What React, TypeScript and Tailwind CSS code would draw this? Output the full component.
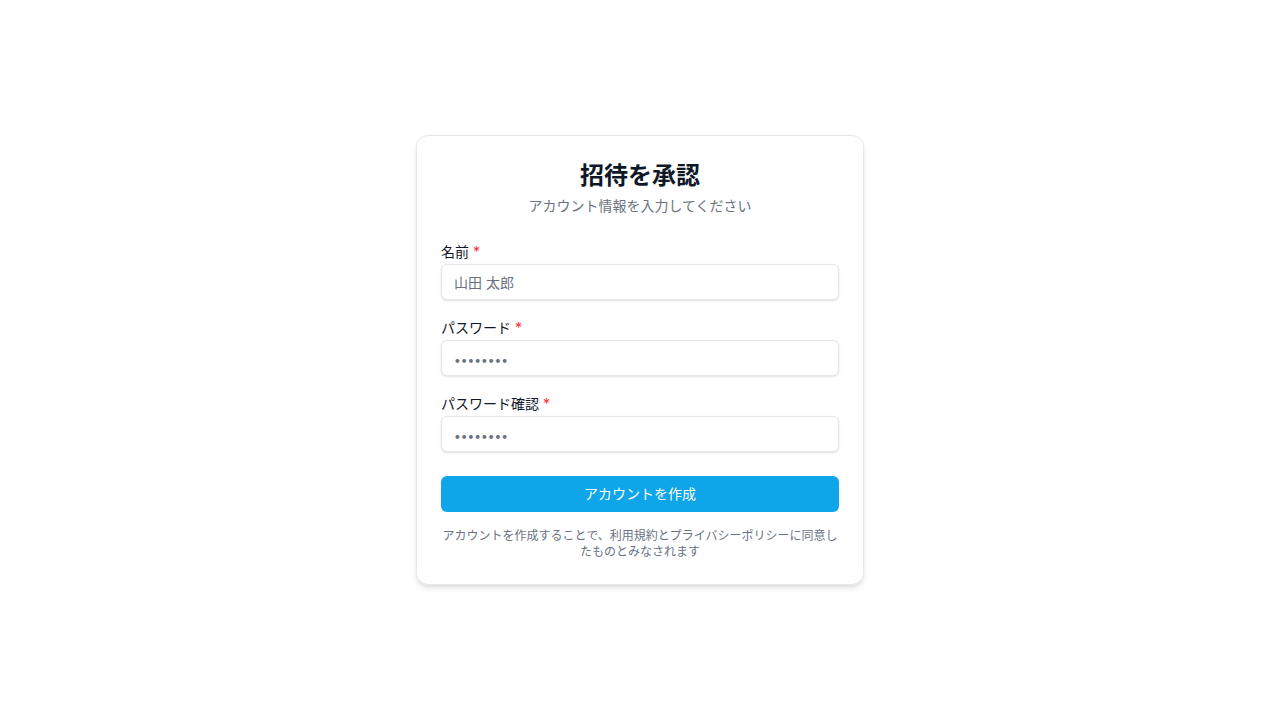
import React from 'react';

const font = { fontFamily: 'Inter, "Noto Sans CJK JP", sans-serif' };

const Field = ({ label, type, placeholder }: { label: string; type: string; placeholder: string }) => (
  <div>
    <label className="block text-sm leading-4 text-gray-900 mb-1">
      {label} <span className="text-red-500">*</span>
    </label>
    <input
      type={type}
      placeholder={placeholder}
      className={
        'w-full h-9 px-3 text-sm rounded-md border border-gray-200 bg-white shadow-sm placeholder:text-gray-500 outline-none' +
        (type === 'password' ? ' placeholder:text-xs' : '')
      }
    />
  </div>
);

export default function App() {
  return (
    <div className="min-h-screen w-full bg-white flex items-center justify-center" style={font}>
      <div className="w-[448px] bg-white border border-gray-200 rounded-xl shadow-md p-6">
        <div className="text-center mb-7">
          <h1 className="text-2xl font-bold text-gray-900">招待を承認</h1>
          <p className="text-sm text-gray-500 mt-1">アカウント情報を入力してください</p>
        </div>

        <div className="space-y-5">
          <Field label="名前" type="text" placeholder="山田 太郎" />
          <Field label="パスワード" type="password" placeholder="••••••••" />
          <Field label="パスワード確認" type="password" placeholder="••••••••" />
        </div>

        <button className="mt-6 w-full h-9 rounded-md bg-[#0ea5e9] text-white text-sm">
          アカウントを作成
        </button>

        <p className="mt-4 text-xs leading-4 text-gray-500 text-center">
          アカウントを作成することで、利用規約とプライバシーポリシーに同意したものとみなされます
        </p>
      </div>
    </div>
  );
}
